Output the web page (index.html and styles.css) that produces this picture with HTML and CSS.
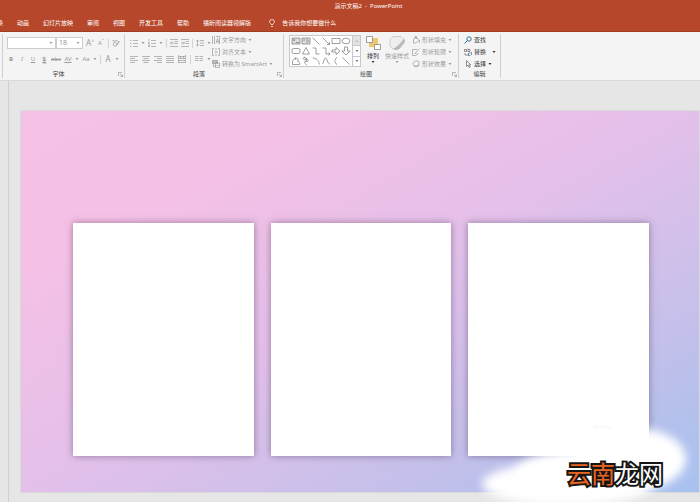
FILE: index.html
```html
<!DOCTYPE html>
<html lang="zh-CN">
<head>
<meta charset="utf-8">
<title>演示文稿2 - PowerPoint</title>
<link rel="stylesheet" href="styles.css">
</head>
<body>
<svg class="sprite" aria-hidden="true">
  <symbol id="caret" viewBox="0 0 4 4"><path d="M.5 1h3L2 3z" fill="currentColor"/></symbol>
  <symbol id="launch" viewBox="0 0 5 5"><path d="M.5 4V.5H4M2 2l2.500 2.500M4.500 2.500v2h-2"/></symbol>
  <symbol id="eraser" viewBox="0 0 8 8"><path d="M1 5l3-4 3 2-3 4H2zM2.500 3l3 2M4 7l3.500-5M.5 2l1-1 1 2"/></symbol>
  <symbol id="bullets" viewBox="0 0 8 8"><path d="M3 1.500h5M3 4.500h5M3 7.500h5M0 1.500h1.500M0 4.500h1.500M0 7.500h1.500"/></symbol>
  <symbol id="numbers" viewBox="0 0 8 8"><path d="M3 1.500h5M3 4.500h5M3 7.500h5M1 0v2M0 3.500h1.500L.5 5h1M0 6h1.500v1.500H0"/></symbol>
  <symbol id="outdent" viewBox="0 0 8 8"><path d="M0 .5h8M4.500 2.500H8M4.500 4.500H8M0 7.500h8M4 4H.5M2 2.500L.5 4 2 5.500"/></symbol>
  <symbol id="indent" viewBox="0 0 8 8"><path d="M0 .5h8M4.500 2.500H8M4.500 4.500H8M0 7.500h8M0 4h3.500M2 2.500L3.500 4 2 5.500"/></symbol>
  <symbol id="spacing" viewBox="0 0 8 8"><path d="M4 1.500h4M4 4h4M4 6.500h4M1.500 1v6M0 2.500L1.500 1 3 2.500M0 5.500L1.500 7 3 5.500"/></symbol>
  <symbol id="left" viewBox="0 0 8 8"><path d="M0 1.500h8M0 3.500h5M0 5.500h8M0 7.500h5"/></symbol>
  <symbol id="center" viewBox="0 0 8 8"><path d="M0 1.500h8M1.500 3.500h5M0 5.500h8M1.500 7.500h5"/></symbol>
  <symbol id="right" viewBox="0 0 8 8"><path d="M0 1.500h8M3 3.500h5M0 5.500h8M3 7.500h5"/></symbol>
  <symbol id="justify" viewBox="0 0 8 8"><path d="M0 1.500h8M0 3.500h8M0 5.500h8M0 7.500h8"/></symbol>
  <symbol id="spread" viewBox="0 0 8 8"><path d="M.5 0v8M7.500 0v8M1 1.500h6M1 3.500h6M1 5.500h6M1 7.500h6M2.500 1v2M5.500 1v2"/></symbol>
  <symbol id="columns" viewBox="0 0 8 8"><path d="M0 1.500h3.500M4.500 1.500H8M0 3.500h3.500M4.500 3.500H8M0 5.500h3.500M4.500 5.500H8"/></symbol>
  <symbol id="direction" viewBox="0 0 8 8"><path d="M.5 0v8M2.500 0v8M4 7.500l1.500-5 1.500 5M4.500 5.500h2M4 .5h4M7.500 1v7"/></symbol>
  <symbol id="valign" viewBox="0 0 8 8"><path d="M2 .5H.5v7H2M6 .5h1.500v7H6M4 0v2.500M4 8V5.500M2.500 4h3"/></symbol>
  <symbol id="smart" viewBox="0 0 8 8"><path d="M.5.5h5v3h-5z" fill="#bbb"/><path d="M3.500 3h4v4.500h-4zM1.500 4v2.500h2M4.500 5.500h2"/></symbol>
  <symbol id="fill" viewBox="0 0 8 8"><path d="M1.500 3.500L4 1l3 3-3 3H1.500zM3 3V.5h1.500V3M7.500 4v3"/></symbol>
  <symbol id="outline" viewBox="0 0 8 8"><path d="M5 1.500H.5v6h3l3-2M3 5.500L7.500.5M3 5.500l1.500-.5"/></symbol>
  <symbol id="effect" viewBox="0 0 8 8"><path d="M3 1h3l1 1v2L5 6H3L1 4.500V3zM2 6.500h4l1.500-2"/></symbol>
</svg>

<header class="top">
  <h1 class="title">演示文稿2 &nbsp;-&nbsp; PowerPoint</h1>
  <nav class="tabs">
    <a href="#">切换</a><a href="#">动画</a><a href="#">幻灯片放映</a><a href="#">审阅</a><a href="#">视图</a><a href="#">开发工具</a><a href="#">帮助</a><a href="#">福昕阅读器领解版</a>
    <a href="#" class="tell"><svg class="bulb" viewBox="0 0 6 8"><path d="M2 5.500C2 4.500.5 4 .5 2.500a2.500 2 0 0 1 5 0C5.500 4 4 4.500 4 5.500zM2 7.500h2"/></svg>告诉我你想要做什么</a>
  </nav>
</header>

<div class="ribbon">
  <section class="group font">
    <div class="body rows">
      <div class="bar boxes">
        <label class="box face"><select aria-label="字体"><option></option></select><svg class="caret"><use href="#caret"/></svg></label>
        <label class="box size"><select aria-label="字号"><option>18</option></select><svg class="caret"><use href="#caret"/></svg></label>
        <button class="big" aria-label="增大字号">A<sup>^</sup></button>
        <button aria-label="减小字号">A<sup>ˇ</sup></button>
        <i class="sep"></i>
        <button aria-label="清除格式"><svg class="icon"><use href="#eraser"/></svg></button>
      </div>
      <div class="bar">
        <button><b>B</b></button><button><em>I</em></button><button><u>U</u></button><button><b class="shade">S</b></button><button class="abc"><s>abc</s></button><button><u>AV</u></button><svg class="caret"><use href="#caret"/></svg><button>Aa</button><svg class="caret"><use href="#caret"/></svg><i class="sep"></i><button class="big">A</button><svg class="caret"><use href="#caret"/></svg>
      </div>
    </div>
    <h2>字体</h2><svg class="launch"><use href="#launch"/></svg>
  </section>

  <section class="group para">
    <div class="body split">
      <div class="rows">
        <div class="bar">
          <button aria-label="项目符号"><svg class="icon"><use href="#bullets"/></svg></button><svg class="caret"><use href="#caret"/></svg><button aria-label="编号"><svg class="icon"><use href="#numbers"/></svg></button><svg class="caret"><use href="#caret"/></svg><i class="sep"></i><button aria-label="减少缩进"><svg class="icon"><use href="#outdent"/></svg></button><button aria-label="增加缩进"><svg class="icon"><use href="#indent"/></svg></button><i class="sep"></i><button aria-label="行距"><svg class="icon"><use href="#spacing"/></svg></button><svg class="caret"><use href="#caret"/></svg>
        </div>
        <div class="bar loose">
          <button aria-label="左对齐"><svg class="icon"><use href="#left"/></svg></button><button aria-label="居中"><svg class="icon"><use href="#center"/></svg></button><button aria-label="右对齐"><svg class="icon"><use href="#right"/></svg></button><button aria-label="两端对齐"><svg class="icon"><use href="#justify"/></svg></button><button aria-label="分散对齐"><svg class="icon"><use href="#spread"/></svg></button><i class="sep"></i><button aria-label="分栏"><svg class="icon"><use href="#columns"/></svg></button><svg class="caret"><use href="#caret"/></svg>
        </div>
      </div>
      <div class="list">
        <button><svg class="icon"><use href="#direction"/></svg>文字方向<svg class="caret"><use href="#caret"/></svg></button>
        <button><svg class="icon"><use href="#valign"/></svg>对齐文本<svg class="caret"><use href="#caret"/></svg></button>
        <button><svg class="icon"><use href="#smart"/></svg>转换为 SmartArt<svg class="caret"><use href="#caret"/></svg></button>
      </div>
    </div>
    <h2>段落</h2><svg class="launch"><use href="#launch"/></svg>
  </section>

  <section class="group draw">
    <div class="body split">
      <div class="gallery">
        <div class="shapes">
          <svg viewBox="0 0 10 10"><path d="M1 2h8v6H1z" fill="#ddd"/><path d="M2 4h2M3 3v2M5 6.500h3"/></svg>
          <svg viewBox="0 0 10 10"><path d="M1 2h8v6H1z" fill="#ddd"/><path d="M6 3v4M2 4h2M7 5h1"/></svg>
          <svg viewBox="0 0 10 10"><path d="M1.500 1.500l7 7"/></svg>
          <svg viewBox="0 0 10 10"><path d="M1.500 1.500l7 7M8.500 6v2.500H6"/></svg>
          <svg viewBox="0 0 10 10"><path d="M1 2.500h8v5H1z"/></svg>
          <svg viewBox="0 0 10 10"><ellipse cx="5" cy="5" rx="4" ry="2.800"/></svg>
          <svg viewBox="0 0 10 10"><rect x="1" y="2.500" width="8" height="5" rx="1.500"/></svg>
          <svg viewBox="0 0 10 10"><path d="M5 1.500L8.500 8h-7z"/></svg>
          <svg viewBox="0 0 10 10"><path d="M1.500 2H5v6h3.500"/></svg>
          <svg viewBox="0 0 10 10"><path d="M1.500 2H5v6h4M7.500 6.500L9 8 7.500 9.500"/></svg>
          <svg viewBox="0 0 10 10"><path d="M1 4h4V1.500L9 5 5 8.500V6H1z"/></svg>
          <svg viewBox="0 0 10 10"><path d="M3.500 1h3v4H9L5 9 1 5h2.500z"/></svg>
          <svg viewBox="0 0 10 10"><path d="M4 2L1.500 5v3.500h7c1-2-.5-3-2-3 1.500-2 0-4-2.500-3.500l1 2"/></svg>
          <svg viewBox="0 0 10 10"><path d="M4 1C1 2 2 4 5 3.500S8 6 5 5.500 4 8 6 9M3 1.500l3 1-1 3"/></svg>
          <svg viewBox="0 0 10 10"><path d="M1.500 2C5 2 7.500 4 8.500 8.500"/></svg>
          <svg viewBox="0 0 10 10"><path d="M1 8c2 0 1.500-6 3.500-6S6 8 9 8"/></svg>
          <svg viewBox="0 0 10 10"><path d="M6 1.500C4 2 5 4.500 3.500 5 5 5.500 4 8 6 8.500"/></svg>
          <svg viewBox="0 0 10 10"><path d="M1.500 1.500l7 7"/></svg>
        </div>
        <div class="scroll">
          <button class="off" aria-label="上一行"><svg class="caret up"><use href="#caret"/></svg></button>
          <button aria-label="下一行"><svg class="caret"><use href="#caret"/></svg></button>
          <button aria-label="更多形状"><svg class="caret"><use href="#caret"/></svg></button>
        </div>
      </div>
      <button class="tall dark"><svg class="art" viewBox="0 0 16 16"><path d="M4 3h9v9H4z" fill="#efc873" stroke="none"/><path d="M1.500 1.500h6v6h-6zM9.500 9.500h6v5h-6z" fill="#fff" stroke="#777"/></svg>排列<svg class="caret"><use href="#caret"/></svg></button>
      <button class="tall"><svg class="art" viewBox="0 0 16 16"><path d="M4 1.500h8l3 3v4L10 14H4l-3-3V4.500z" fill="#eee" stroke="#bbb"/><path d="M15 4.500L9 11l-4 3c3 1 5 0 6-2l4.500-6z" fill="#bbb" stroke="#aaa"/></svg>快速样式<svg class="caret"><use href="#caret"/></svg></button>
      <div class="list">
        <button><svg class="icon"><use href="#fill"/></svg>形状填充<svg class="caret"><use href="#caret"/></svg></button>
        <button><svg class="icon"><use href="#outline"/></svg>形状轮廓<svg class="caret"><use href="#caret"/></svg></button>
        <button><svg class="icon"><use href="#effect"/></svg>形状效果<svg class="caret"><use href="#caret"/></svg></button>
      </div>
    </div>
    <h2>绘图</h2><svg class="launch"><use href="#launch"/></svg>
  </section>

  <section class="group edit">
    <div class="body split">
      <div class="list dark">
        <button><svg class="icon find" viewBox="0 0 8 8"><circle cx="5" cy="3" r="2.200"/><path d="M3.500 4.500L.5 7.500"/></svg>查找</button>
        <button><svg class="icon" viewBox="0 0 8 8"><path d="M.5 1.500h2v2h-2zM4 .5v3h2v-2H4M1 5v2h2M6.500 5H4.500v2.500h2" stroke="#666"/><path d="M3 7h2M7.500 4v3" stroke="#2f7595"/></svg>替换<svg class="caret far"><use href="#caret"/></svg></button>
        <button><svg class="icon" viewBox="0 0 8 8"><path d="M2.500.5v6L4 5l1.200 2.500 1-.5L5 4.800h1.800z" stroke="#666"/></svg>选择<svg class="caret"><use href="#caret"/></svg></button>
      </div>
    </div>
    <h2>编辑</h2>
  </section>
</div>

<main class="work">
  <div class="slide">
    <div class="card"></div><div class="card"></div><div class="card"></div>
  </div>
  <div class="mark">
    <i class="cloud one"></i><i class="cloud two"></i><i class="cloud three"></i>
    <svg class="faint" viewBox="0 0 20 6"><path d="M1 4l3-2 3 2M10 2v3M13 4l2-2 3 1v2"/></svg>
    <p><span>云南</span>龙网</p>
  </div>
</main>
</body>
</html>
```

FILE: styles.css
```css
* { box-sizing: border-box; }

body {
  margin: 0;
  min-height: 100vh;
  display: flex;
  flex-direction: column;
  overflow: hidden;
  background: #e6e6e6;
  font: 6px/8px "Noto Sans", "Noto Sans CJK SC", sans-serif;
  color: #999;
}

h1, h2, p { margin: 0; font-size: inherit; font-weight: 400; }
a { color: inherit; text-decoration: none; }
button { border: 0; padding: 0; background: none; font: inherit; color: inherit; }
svg { display: block; flex: none; fill: none; stroke: currentColor; stroke-width: 0.7; }
.sprite { position: absolute; width: 0; height: 0; }

/* Title bar and tabs */
.top { background: #b7472a; color: #fff; height: 32px; border-bottom: 1px solid #a03c22; }
.title { padding: 2px 0 0 37px; text-align: center; }
.tabs { display: flex; gap: 14px; margin: 9px 0 0 -9px; white-space: nowrap; }
.tell { display: flex; gap: 7px; margin-left: 4px; }
.bulb { width: 6px; height: 8px; }

/* Ribbon */
.ribbon { display: flex; height: 49px; padding-left: 2px; background: #f4f4f4; border-bottom: 1px solid #d9d9d9; }
.group {
  position: relative;
  display: flex;
  flex-direction: column;
  margin: 2px 0;
  border-left: 1px solid #cfcfcf;
  white-space: nowrap;
}
.font { width: 122px; }
.para { width: 159px; }
.draw { width: 175px; }
.edit { width: 43px; border-right: 1px solid #cfcfcf; }
.group h2 { text-align: center; color: #444; padding-right: 10px; }
.edit h2 { padding-right: 0; }
.launch { position: absolute; right: 1px; bottom: 1px; width: 5px; height: 5px; }

.body { height: 37px; padding-left: 5px; }
.split { display: flex; }
.rows { display: flex; flex-direction: column; gap: 4px; padding-top: 3px; }
.bar { display: flex; align-items: center; gap: 3px; height: 12px; }
.loose { gap: 4px; }
.bar button { width: 8px; display: flex; justify-content: center; }
.bar .abc { width: 10px; }
.bar .big { font-size: 8px; }
.bar sup { font-size: 5px; line-height: 5px; }
.shade { text-shadow: 1px 1px #ccc; text-decoration: underline; }
.icon { width: 8px; height: 8px; }
.caret { width: 4px; height: 4px; stroke: none; }
.sep { width: 1px; height: 9px; background: #d4d4d4; }
.font .rows, .font .body { padding-left: 4px; }

.box {
  position: relative;
  display: flex;
  align-items: center;
  height: 12px;
  margin-right: -3px;
  padding-right: 2px;
  background: #fff;
  border: 1px solid #cdcdcd;
}
.box select { appearance: none; flex: 1; min-width: 0; border: 0; padding: 0 0 0 2px; background: none; font: 7px/8px "Noto Sans", sans-serif; color: #999; }
.face { width: 49px; }
.size { width: 27px; margin-right: 0; }

.list { display: flex; flex-direction: column; }
.list button { display: flex; align-items: center; gap: 2px; height: 12px; }
.list .far { margin-left: 4px; }
.para .list { margin-left: 1px; }
.dark { color: #333; }
.find { stroke: #2f7595; stroke-width: 1; }

.gallery { display: flex; height: 32px; margin-top: 1px; border: 1px solid #c8c8c8; background: #fff; color: #777; }
.shapes { display: grid; grid-template-columns: repeat(6, 10px); grid-auto-rows: 10px; padding: 0 1px; }
.scroll { display: grid; width: 8px; border-left: 1px solid #c8c8c8; }
.scroll button { display: grid; place-items: center; }
.scroll button + button { border-top: 1px solid #c8c8c8; }
.scroll .off { background: #e2e2e2; color: #bbb; }
.up { transform: rotate(180deg); }
.tall { display: flex; flex-direction: column; align-items: center; width: 24px; padding-top: 1px; }
.art { width: 16px; height: 16px; margin-bottom: 1px; }
.draw .list { margin-left: 3px; }

/* Editing area */
.work { position: relative; flex: 1; display: flex; margin-left: 8px; padding: 30px 1px 10px 12px; border-left: 1px solid #cdd0d0; }
.slide {
  flex: 1;
  display: grid;
  grid-template-columns: repeat(3, 1fr);
  gap: 17px;
  padding: 112px 50px 36px 52px;
  background: linear-gradient(to bottom right, #f6c1e6 0%, #f6c0e6 20%, #e3c0ea 50%, #c8c0ea 74%, #b5c0ec 88%, #a8c2f0 100%);
  box-shadow: 0 0 1px #999;
}
.card { background: #fff; box-shadow: 0 0 7px rgba(80, 60, 90, 0.55); }

/* Corner watermark */
.mark { position: absolute; right: 0; bottom: 0; width: 240px; height: 90px; overflow: hidden; }
.cloud { position: absolute; border-radius: 50%; background: #fff; filter: blur(5px); }
.one { right: 14px; top: 15px; width: 112px; height: 64px; }
.two { left: 56px; top: 38px; width: 140px; height: 44px; }
.three { left: 22px; top: 50px; width: 170px; height: 44px; }
.faint { position: absolute; left: 132px; top: 12px; width: 20px; height: 6px; color: #eee; }
.mark p {
  position: absolute;
  right: 37px;
  bottom: 13px;
  font: 400 24px/32px "Noto Sans CJK SC", sans-serif;
  color: #fff;
  -webkit-text-stroke: 4px #161616;
  paint-order: stroke fill;
}
.mark span { color: #ea641f; }
```
